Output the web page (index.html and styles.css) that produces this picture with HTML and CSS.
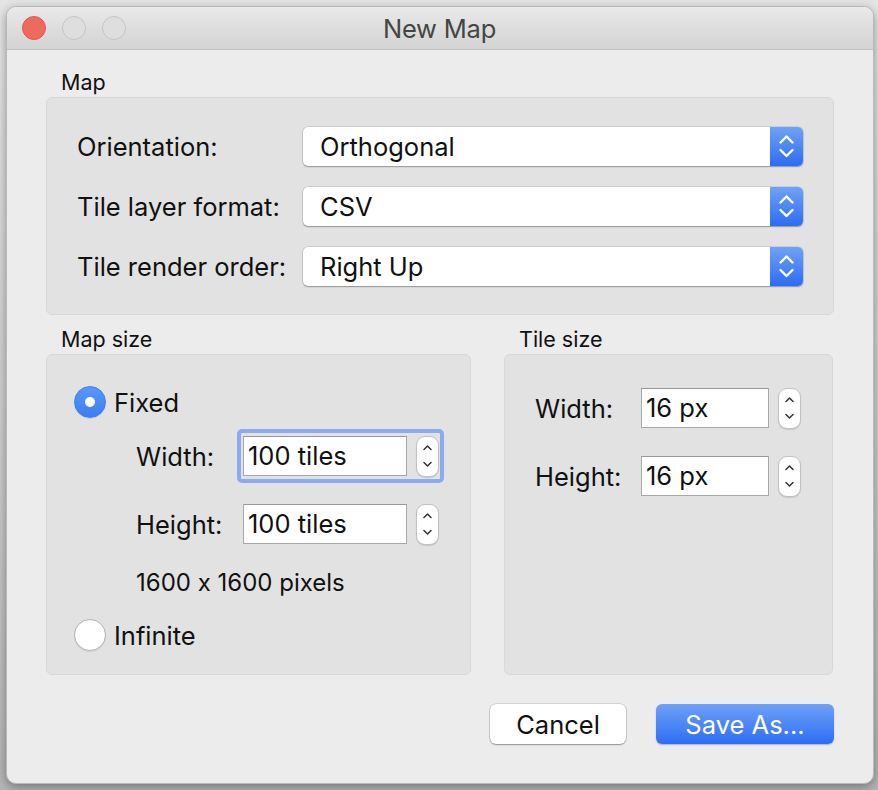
FILE: index.html
```html
<!DOCTYPE html>
<html>
<head>
<meta charset="utf-8">
<link rel="stylesheet" href="styles.css">
</head>
<body>
<div class="window">
  <div class="titlebar">
    <div class="lights">
      <span class="light red"></span>
      <span class="light"></span>
      <span class="light"></span>
    </div>
    <div class="title">New Map</div>
    <div></div>
  </div>
  <div class="content">
    <section class="group">
      <div class="group-title">Map</div>
      <div class="group-box map-box">
        <label class="lbl">Orientation:</label>
        <div class="combo"><span class="combo-text">Orthogonal</span><span class="combo-arrow"><svg width="15" height="23" viewBox="0 0 15 23"><path d="M1.5 7.5 L7.5 1.5 L13.5 7.5 M1.5 15 L7.5 21 L13.5 15" fill="none" stroke="#fff" stroke-width="2.4" stroke-linecap="round" stroke-linejoin="round"/></svg></span></div>
        <label class="lbl">Tile layer format:</label>
        <div class="combo"><span class="combo-text">CSV</span><span class="combo-arrow"><svg width="15" height="23" viewBox="0 0 15 23"><path d="M1.5 7.5 L7.5 1.5 L13.5 7.5 M1.5 15 L7.5 21 L13.5 15" fill="none" stroke="#fff" stroke-width="2.4" stroke-linecap="round" stroke-linejoin="round"/></svg></span></div>
        <label class="lbl">Tile render order:</label>
        <div class="combo"><span class="combo-text">Right Up</span><span class="combo-arrow"><svg width="15" height="23" viewBox="0 0 15 23"><path d="M1.5 7.5 L7.5 1.5 L13.5 7.5 M1.5 15 L7.5 21 L13.5 15" fill="none" stroke="#fff" stroke-width="2.4" stroke-linecap="round" stroke-linejoin="round"/></svg></span></div>
      </div>
    </section>

    <div class="two-col">
      <section class="group size-group">
        <div class="group-title">Map size</div>
        <div class="group-box size-box">
          <div class="radio-row fixed-row"><span class="radio on"></span><span>Fixed</span></div>
          <div class="field-row width-row">
            <span class="flbl">Width:</span>
            <div class="spin focused">
              <div class="field">100 tiles</div>
              <div class="stepper"><svg width="9" height="24" viewBox="0 0 9 24"><path d="M1 5.5 L4.5 2 L8 5.5 M1 18.5 L4.5 22 L8 18.5" fill="none" stroke="#333" stroke-width="1.5" stroke-linecap="round" stroke-linejoin="round"/></svg></div>
            </div>
          </div>
          <div class="field-row height-row">
            <span class="flbl">Height:</span>
            <div class="spin">
              <div class="field">100 tiles</div>
              <div class="stepper"><svg width="9" height="24" viewBox="0 0 9 24"><path d="M1 5.5 L4.5 2 L8 5.5 M1 18.5 L4.5 22 L8 18.5" fill="none" stroke="#333" stroke-width="1.5" stroke-linecap="round" stroke-linejoin="round"/></svg></div>
            </div>
          </div>
          <div class="pixels">1600 x 1600 pixels</div>
          <div class="radio-row infinite-row"><span class="radio"></span><span>Infinite</span></div>
        </div>
      </section>

      <section class="group tile-group">
        <div class="group-title">Tile size</div>
        <div class="group-box tile-box">
          <div class="field-row tile-row">
            <span class="flbl tlbl">Width:</span>
            <div class="spin">
              <div class="field small">16 px</div>
              <div class="stepper"><svg width="9" height="24" viewBox="0 0 9 24"><path d="M1 5.5 L4.5 2 L8 5.5 M1 18.5 L4.5 22 L8 18.5" fill="none" stroke="#333" stroke-width="1.5" stroke-linecap="round" stroke-linejoin="round"/></svg></div>
            </div>
          </div>
          <div class="field-row tile-row second">
            <span class="flbl tlbl">Height:</span>
            <div class="spin">
              <div class="field small">16 px</div>
              <div class="stepper"><svg width="9" height="24" viewBox="0 0 9 24"><path d="M1 5.5 L4.5 2 L8 5.5 M1 18.5 L4.5 22 L8 18.5" fill="none" stroke="#333" stroke-width="1.5" stroke-linecap="round" stroke-linejoin="round"/></svg></div>
            </div>
          </div>
        </div>
      </section>
    </div>

    <div class="buttons">
      <button class="btn cancel">Cancel</button>
      <button class="btn primary">Save As...</button>
    </div>
  </div>
</div>
</body>
</html>
```

FILE: styles.css
```css
* { box-sizing: border-box; }
html, body { margin: 0; padding: 0; }
body {
  width: 878px;
  height: 790px;
  background: linear-gradient(#e4e4e4, #c9c9c9 60%, #b4b4b4);
  font-family: "Inter", "Liberation Sans", sans-serif;
  font-feature-settings: "calt" 0;
  color: #111;
  overflow: hidden;
  padding: 6px 4px 0 6px;
}
.window {
  width: 868px;
  height: 778px;
  background: #ececec;
  border-radius: 10px;
  border: 1px solid #b9b9b9;
  box-shadow: 0 3px 10px rgba(0,0,0,0.35);
  overflow: hidden;
  display: flex;
  flex-direction: column;
}
.titlebar {
  height: 43px;
  flex: none;
  display: grid;
  grid-template-columns: 1fr auto 1fr;
  align-items: center;
  background: linear-gradient(#e9e9e9, #d3d3d3);
  border-bottom: 1px solid #c0c0c0;
  padding: 0 16px 0 15px;
}
.lights { display: flex; gap: 16px; }
.light {
  width: 24px; height: 24px; border-radius: 50%;
  border: 1px solid #c4c4c4;
  background: #dedede;
}
.light.red { background: #ee6a5f; border-color: #e0574c; }
.title {
  font-size: 25.5px;
  color: #454545;
  letter-spacing: -0.2px;
}
.content {
  padding: 18px 39px 0 39px;
  font-size: 25.5px;
}
.group-title {
  font-size: 21.5px;
  height: 26px;
  line-height: 28px;
  padding-left: 15px;
  margin-bottom: 3px;
}
.group-box {
  background: #e2e2e2;
  border: 1px solid #d8d8d8;
  border-radius: 6px;
}
.map-box {
  height: 218px;
  padding: 29px 29px 0 30px;
  display: grid;
  grid-template-columns: 226px 500px;
  grid-auto-rows: 39px;
  row-gap: 21px;
  align-items: center;
}
.lbl { line-height: 39px; }
.combo {
  height: 39px;
  display: flex;
  background: #fff;
  border-radius: 5px;
  box-shadow: 0 0 0 0.5px rgba(0,0,0,0.18), 0 1px 1.5px rgba(0,0,0,0.28);
  overflow: hidden;
}
.combo-text { flex: 1; padding-left: 17px; line-height: 39px; }
.combo-arrow {
  width: 33px;
  background: linear-gradient(#6fa2f7, #2c6cf5);
  display: flex;
  align-items: center;
  justify-content: center;
}
.two-col {
  display: flex;
  gap: 33px;
  margin-top: 10px;
}
.size-group { width: 425px; }
.tile-group { width: 329px; }
.size-box, .tile-box { height: 321px; }
.size-box { padding: 31px 0 0 27px; }
.radio-row { display: flex; align-items: center; gap: 8px; height: 32px; }
.radio {
  width: 32px; height: 32px; border-radius: 50%;
  background: #fff;
  border: 1px solid #b3b3b3;
  box-shadow: 0 1px 1px rgba(0,0,0,0.08);
  display: flex; align-items: center; justify-content: center;
}
.radio.on {
  background: linear-gradient(#5b97f6, #3b7ef2);
  border-color: #3d7fe9;
}
.radio.on::after {
  content: "";
  width: 10px; height: 10px; border-radius: 50%;
  background: #fff;
}
.field-row { display: flex; align-items: center; height: 40px; }
.flbl { width: 107px; }
.width-row { margin: 18px 0 0 62px; }
.height-row { margin: 28px 0 0 62px; }
.spin {
  display: flex;
  align-items: center;
  gap: 9px;
  position: relative;
}
.spin.focused::before {
  content: "";
  position: absolute;
  left: -6px; top: -7px; right: -5px; bottom: -6px;
  border: 4px solid #8aabed;
  border-radius: 5px;
}
.field {
  width: 164px;
  height: 40px;
  background: #fff;
  border: 1px solid #a8a8a8;
  border-top-color: #9a9a9a;
  padding-left: 4px;
  line-height: 38px;
}
.field.small { width: 128px; }
.stepper {
  width: 23px; height: 41px;
  background: #fff;
  border: 1px solid #c2c2c2;
  border-radius: 9px;
  box-shadow: 0 1px 1px rgba(0,0,0,0.12);
  display: flex; align-items: center; justify-content: center;
  position: relative;
}
.pixels {
  margin: 26px 0 0 62px;
  height: 26px;
  line-height: 26px;
  font-size: 24px;
}
.infinite-row { margin-top: 23px; }
.tile-box { padding: 33px 0 0 30px; }
.tlbl { width: 106px; }
.tile-row.second { margin-top: 28px; }
.buttons {
  display: flex;
  justify-content: flex-end;
  gap: 30px;
  margin-top: 29px;
}
.btn {
  height: 40px;
  border-radius: 6px;
  font-family: inherit;
  font-feature-settings: "calt" 0;
  font-size: 25.5px;
  border: none;
  padding: 0;
}
.cancel {
  width: 136px;
  background: #fff;
  color: #111;
  box-shadow: 0 0 0 0.5px rgba(0,0,0,0.2), 0 1px 1.5px rgba(0,0,0,0.3);
}
.primary {
  width: 178px;
  background: linear-gradient(#6ea1f6, #2d6df5);
  color: #fff;
  box-shadow: 0 1px 1.5px rgba(0,0,0,0.25);
}
```
